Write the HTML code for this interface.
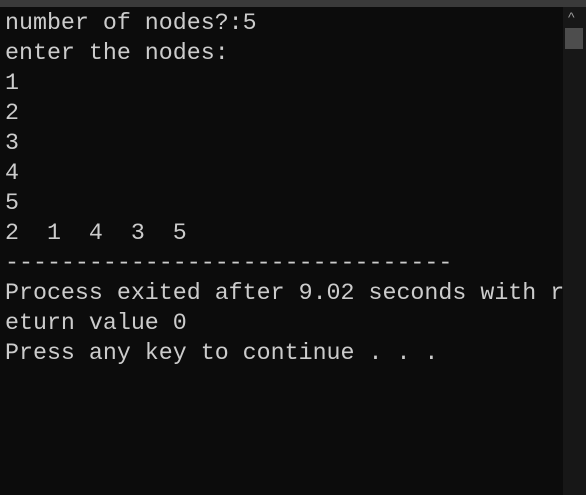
<!DOCTYPE html>
<html><head><style>
html,body{margin:0;padding:0;width:586px;height:495px;overflow:hidden;background:#0c0c0c;}
#top{position:absolute;left:0;top:0;width:586px;height:7px;background:#3a3a3a;}
#sb{position:absolute;left:563px;top:7px;width:23px;height:488px;background:#171717;}
#thumb{position:absolute;left:565px;top:28px;width:18px;height:21px;background:#4d4d4d;}
#arr{position:absolute;left:568px;top:9px;color:#9a9a9a;font:14px "Liberation Sans",sans-serif;}
pre{position:absolute;left:5px;top:8px;margin:0;font-family:"Liberation Mono",monospace;font-size:23.3px;line-height:30px;color:#cccccc;}
</style></head><body>
<div id="top"></div><div id="sb"></div><div id="thumb"></div><div id="arr">^</div>
<pre>number of nodes?:5
enter the nodes:
1
2
3
4
5
2  1  4  3  5
--------------------------------
Process exited after 9.02 seconds with r
eturn value 0
Press any key to continue . . .</pre>
</body></html>
